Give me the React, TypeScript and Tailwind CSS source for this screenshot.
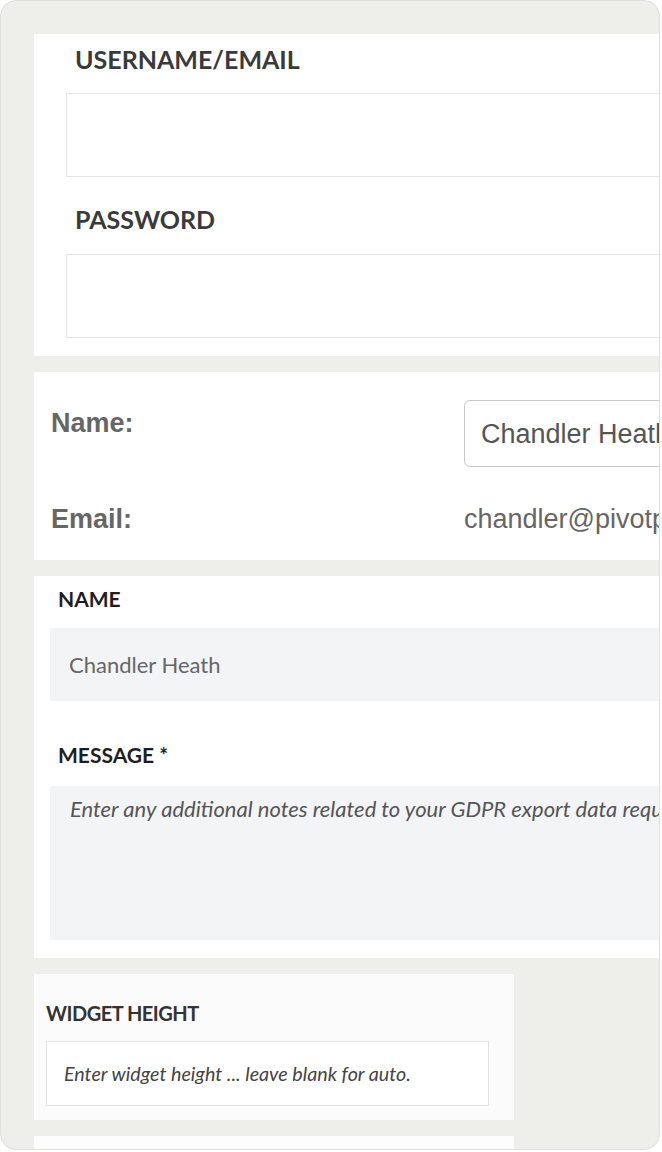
export default function App() {
  return (
    <div className="min-h-[1152px] bg-white">
      <div className="h-[1150px] w-[660px] overflow-hidden rounded-2xl border border-[#dfdfdc] bg-[#eeeeeb] pl-[33px] pt-[33px] font-['Lato',sans-serif]">
        <div className="flex w-[720px] flex-col gap-4">
          {/* login fields */}
          <section className="bg-white px-[32px] pb-[18px] pt-[12px]">
            <p className="pl-[9px] text-[25px] font-bold leading-[26px] text-[#3a3a3a]">USERNAME/EMAIL</p>
            <div className="mt-[21px] h-[84px] w-full border border-[#e3e5e8] bg-white" />
            <p className="mt-[29px] pl-[9px] text-[25px] font-bold leading-[26px] text-[#3a3a3a]">PASSWORD</p>
            <div className="mt-[22px] h-[84px] w-full border border-[#e3e5e8] bg-white" />
          </section>

          {/* profile summary */}
          <section className="bg-white pb-[28px] pl-[17px] pt-[28px] font-['Liberation_Sans',Arial,sans-serif]">
            <div className="flex items-start">
              <span className="mt-[10px] w-[413px] shrink-0 text-[27px] font-bold leading-[26px] text-[#666]">Name:</span>
              <div className="flex h-[67px] w-[300px] items-center rounded-md border border-[#c9c9c9] bg-white pl-[16px]">
                <span className="whitespace-nowrap text-[27px] leading-[26px] text-[#555]">Chandler Heath</span>
              </div>
            </div>
            <div className="mt-[39px] flex items-start">
              <span className="w-[413px] shrink-0 text-[27px] font-bold leading-[26px] text-[#666]">Email:</span>
              <span className="whitespace-nowrap text-[27px] leading-[26px] text-[#666]">chandler@pivotpoint.com</span>
            </div>
          </section>

          {/* gdpr request */}
          <section className="bg-white pb-[18px] pl-[16px] pt-[13px]">
            <p className="pl-[8px] text-[21px] font-bold leading-[20px] text-[#1e1e1e]">NAME</p>
            <div className="mt-[19px] flex h-[73px] items-center bg-[#f3f4f5] pl-[19px]">
              <span className="text-[22px] leading-[22px] text-[#666]">Chandler Heath</span>
            </div>
            <p className="mt-[44px] pl-[8px] text-[21px] font-bold leading-[20px] text-[#1e1e1e]">MESSAGE *</p>
            <div className="mt-[21px] h-[154px] bg-[#f3f4f5] pl-[20px] pt-[11px]">
              <p className="whitespace-nowrap text-[22px] italic leading-[24px] text-[#555]">
                Enter any additional notes related to your GDPR export data request
              </p>
            </div>
          </section>

          {/* widget settings */}
          <section className="w-[480px] bg-[#fbfbfb] px-[12px] pb-[14px] pt-[29px]">
            <p className="text-[20px] font-bold leading-[20px] tracking-[-0.5px] text-[#333]">WIDGET HEIGHT</p>
            <div className="mt-[18px] flex h-[65px] w-[443px] items-center border border-[#e2e2e2] bg-white pl-[17px]">
              <span className="text-[19.7px] italic leading-[20px] text-[#444]">
                Enter widget height ... leave blank for auto.
              </span>
            </div>
          </section>

          <section className="h-[40px] w-[480px] bg-[#fdfdfd]" />
        </div>
      </div>
    </div>
  );
}
